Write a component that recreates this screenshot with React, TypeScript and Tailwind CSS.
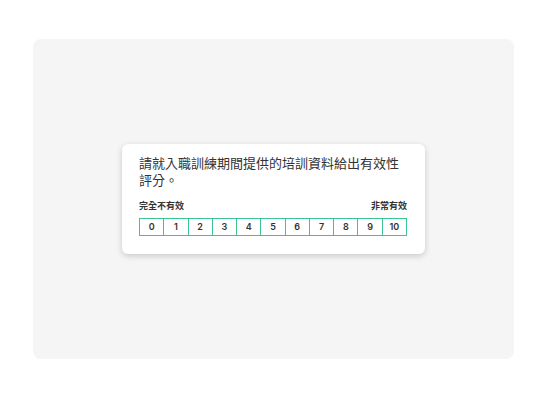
import React from "react"

const scores = [0, 1, 2, 3, 4, 5, 6, 7, 8, 9, 10]

const RatingCard = () => {
    return (
        <div className="w-[303px] rounded-md bg-white pl-[17px] pr-[18px] pt-[10px] pb-[18px] shadow-[0_2px_6px_rgba(0,0,0,0.18)]">
            <h1
                className="text-[13px] leading-[17px] text-[#333333]"
                style={{ fontFamily: '"Noto Sans CJK TC", "Noto Sans", sans-serif' }}
            >
                請就入職訓練期間提供的培訓資料給出有效性評分。
            </h1>
            <div
                className="mt-[12px] flex justify-between text-[9px] font-bold leading-[12px] text-[#333333]"
                style={{ fontFamily: '"Noto Sans CJK TC", sans-serif' }}
            >
                <span>完全不有效</span>
                <span>非常有效</span>
            </div>
            <ul className="mt-[6px] flex h-[18px] border-[1.5px] border-[#3dc493]">
                {scores.map((n) => (
                    <li
                        key={n}
                        className="flex flex-1 items-center justify-center border-l-[1.5px] border-[#3dc493] text-[9px] font-semibold text-[#333333] first:border-l-0"
                        style={{ fontFamily: 'Inter, "Noto Sans", sans-serif' }}
                    >
                        {n}
                    </li>
                ))}
            </ul>
        </div>
    )
}

export default function App() {
    return (
        <div className="flex h-[400px] w-[547px] justify-center bg-white pt-[39px]">
            <div className="flex h-[320px] w-[481px] items-center justify-center rounded-lg bg-[#f5f5f5]">
                <RatingCard />
            </div>
        </div>
    )
}
